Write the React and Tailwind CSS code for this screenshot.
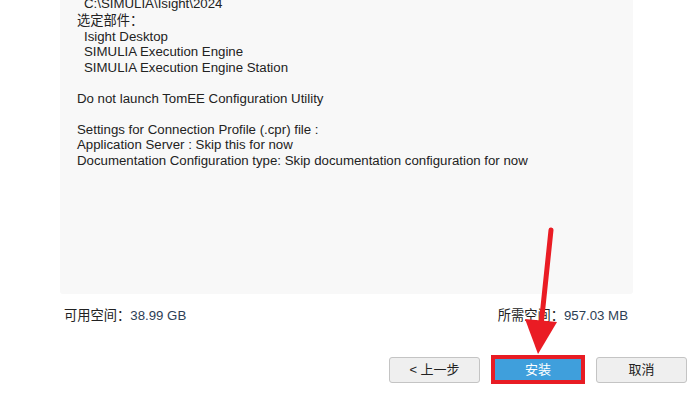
const SUMMARY = [
  { text: "C:\\SIMULIA\\Isight\\2024", indent: true },
  { text: "选定部件：", cjk: true },
  { text: "Isight Desktop", indent: true },
  { text: "SIMULIA Execution Engine", indent: true },
  { text: "SIMULIA Execution Engine Station", indent: true },
  { text: "" },
  { text: "Do not launch TomEE Configuration Utility" },
  { text: "" },
  { text: "Settings for Connection Profile (.cpr) file :" },
  { text: "Application Server : Skip this for now" },
  { text: "Documentation Configuration type: Skip documentation configuration for now" },
];

const FONT = "font-['Liberation_Sans','Noto_Sans_CJK_SC',sans-serif]";

function Button({ children, primary }) {
  if (primary) {
    return (
      <button className="w-[94px] h-[29px] border-[4px] border-[#e81c24] bg-[#3f9fdc] text-white text-[13px] flex items-center justify-center">
        {children}
      </button>
    );
  }
  return (
    <button className="w-[91px] h-[26px] border border-[#c4c4c4] rounded-[3px] bg-[#efefef] text-[#222] text-[13px] flex items-center justify-center">
      {children}
    </button>
  );
}

export default function App() {
  return (
    <div className={`relative w-[688px] h-[399px] bg-white overflow-hidden ${FONT}`}>
      <div className="ml-[60px] w-[573px] h-[294px] bg-[#f8f8f8] rounded-b-[3px] overflow-hidden">
        <div className="mt-[-4px] pl-[17px] text-[13.25px] leading-[15.5px] text-[#222]">
          {SUMMARY.map((line, i) => (
            <div
              key={i}
              className={`whitespace-pre ${line.indent ? "pl-[7px]" : ""} ${line.cjk ? "h-[17px] pt-px" : "h-[15.5px]"}`}
            >
              {line.text}
            </div>
          ))}
        </div>
      </div>

      <div className="flex justify-between pl-[64px] pr-[60px] mt-[14px] text-[13.25px] leading-[16px] text-[#222]">
        <span>可用空间：<span className="text-[#2d3e55]">38.99 GB</span></span>
        <span>所需空间：<span className="text-[#2d3e55]">957.03 MB</span></span>
      </div>

      <div className="flex items-center justify-end gap-[11px] mt-[31px] pr-px">
        <Button>&lt; 上一步</Button>
        <Button primary>安装</Button>
        <Button>取消</Button>
      </div>

      {/* red annotation arrow */}
      <svg className="absolute left-0 top-0 pointer-events-none" width="688" height="399">
        <line x1="551" y1="230" x2="541" y2="326" stroke="#ea1c24" strokeWidth="5" strokeLinecap="round" />
        <polygon points="525,319 557,322 538,354" fill="#ea1c24" />
      </svg>
    </div>
  );
}
